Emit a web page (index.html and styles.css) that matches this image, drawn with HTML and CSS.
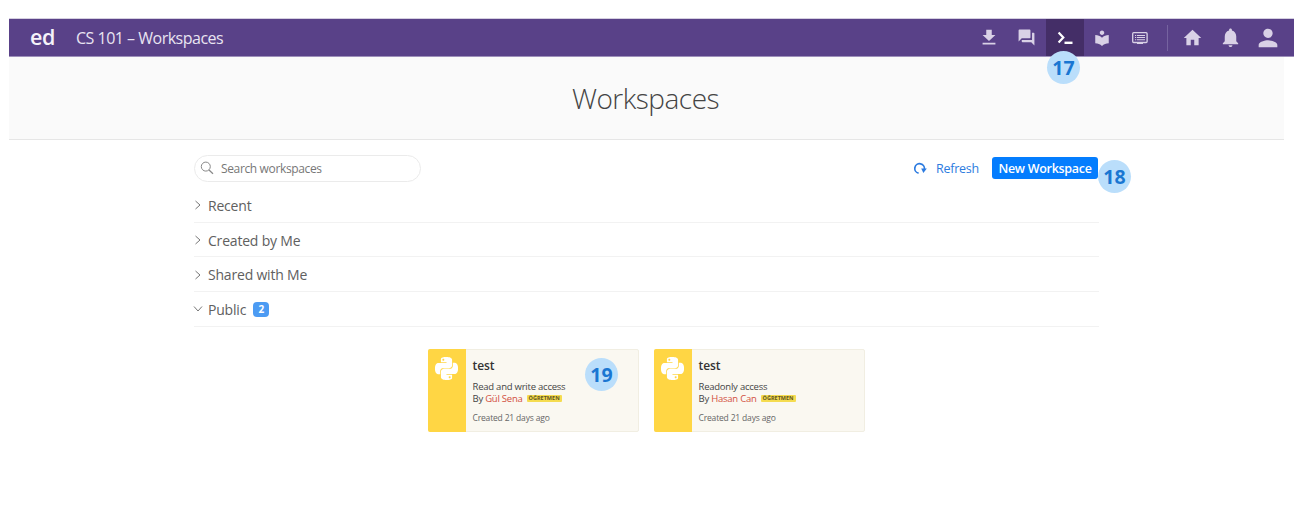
FILE: index.html
```html
<!DOCTYPE html>
<html lang="en">
<head>
<meta charset="utf-8">
<title>CS 101 – Workspaces</title>
<link rel="stylesheet" href="styles.css">
</head>
<body>
<svg class="defs" width="0" height="0">
  <symbol id="python" viewBox="0 0 24 24"><path d="M14.25.18l.9.2.73.26.59.3.45.32.34.34.25.34.16.33.1.3.04.26.02.2-.01.13V8.5l-.05.63-.13.55-.21.46-.26.38-.3.31-.33.25-.35.19-.35.14-.33.1-.3.07-.26.04-.21.02H8.77l-.69.05-.59.14-.5.22-.41.27-.33.32-.27.35-.2.36-.15.37-.1.35-.07.32-.04.27-.02.21v3.06H3.17l-.21-.03-.28-.07-.32-.12-.35-.18-.36-.26-.36-.36-.35-.46-.32-.59-.28-.73-.21-.88-.14-1.05-.05-1.23.06-1.22.16-1.04.24-.87.32-.71.36-.57.4-.44.42-.33.42-.24.4-.16.36-.1.32-.05.24-.01h.16l.06.01h8.16v-.83H6.18l-.01-2.75-.02-.37.05-.34.11-.31.17-.28.25-.26.31-.23.38-.2.44-.18.51-.15.58-.12.64-.1.71-.06.77-.04.84-.02 1.27.05zm-6.3 1.98l-.23.33-.08.41.08.41.23.34.33.22.41.09.41-.09.33-.22.23-.34.08-.41-.08-.41-.23-.33-.33-.22-.41-.09-.41.09zm13.09 3.95l.28.06.32.12.35.18.36.27.36.35.35.47.32.59.28.73.21.88.14 1.04.05 1.23-.06 1.23-.16 1.04-.24.86-.32.71-.36.57-.4.45-.42.33-.42.24-.4.16-.36.09-.32.05-.24.02-.16-.01h-8.22v.82h5.84l.01 2.76.02.36-.05.34-.11.31-.17.29-.25.25-.31.24-.38.2-.44.17-.51.15-.58.13-.64.09-.71.07-.77.04-.84.01-1.27-.04-1.07-.14-.9-.2-.73-.25-.59-.3-.45-.33-.34-.34-.25-.34-.16-.33-.1-.3-.04-.25-.02-.2.01-.13v-5.34l.05-.64.13-.54.21-.46.26-.38.3-.32.33-.24.35-.2.35-.14.33-.1.3-.06.26-.04.21-.02.13-.01h5.84l.69-.05.59-.14.5-.21.41-.28.33-.32.27-.35.2-.36.15-.36.1-.35.07-.32.04-.28.02-.21V6.07h2.09l.14.01zm-6.47 14.25l-.23.33-.08.41.08.41.23.33.33.23.41.08.41-.08.33-.23.23-.33.08-.41-.08-.41-.23-.33-.33-.23-.41-.08-.41.08z"/></symbol>
  <symbol id="chevron" viewBox="0 0 10 10"><path d="M2.5 1 7 5 2.5 9" fill="none" stroke="currentColor" stroke-width="1"/></symbol>
</svg>
<header class="topbar">
  <span class="logo">ed</span>
  <span class="course">CS 101 – Workspaces</span>
  <nav class="tabs">
    <a class="tab"><svg width="22" height="21" viewBox="0 0 24 24" preserveAspectRatio="none"><path d="M19 9h-4V3H9v6H5l7 7 7-7zM5 18v2h14v-2H5z"/></svg></a>
    <a class="tab"><svg width="19" height="19" viewBox="0 0 24 24"><path d="M21 6h-2v9H6v2c0 .55.45 1 1 1h11l4 4V7c0-.55-.45-1-1-1zm-4 6V3c0-.55-.45-1-1-1H3c-.55 0-1 .45-1 1v14l4-4h10c.55 0 1-.45 1-1z"/></svg></a>
    <a class="tab active"><svg width="18" height="16" viewBox="0 0 18 16"><path d="M2.6 2.5 7.3 7.5 2.6 12.5" fill="none" stroke="currentColor" stroke-width="2.2"/><path d="M8.5 11.6h8v2.4h-8z"/></svg></a>
    <a class="tab"><svg width="18" height="18" viewBox="0 0 24 24"><path d="M12 11.55C9.64 9.35 6.48 8 3 8v11c3.48 0 6.64 1.35 9 3.55 2.36-2.19 5.52-3.55 9-3.55V8c-3.48 0-6.64 1.35-9 3.55zM12 8c1.66 0 3-1.34 3-3s-1.34-3-3-3-3 1.34-3 3 1.34 3 3 3z"/></svg></a>
    <a class="tab"><svg width="16" height="14" viewBox="0 0 16 14"><rect x=".7" y="1.7" width="14.4" height="9.8" rx="1" fill="none" stroke="currentColor" stroke-width="1.3"/><path d="M5 11.5h6V13H5zM3 4h1.2v1H3zM5 4h8v1H5zM3 6.1h1.2v1H3zM5 6.1h8v1H5zM3 8.2h1.2v1H3zM5 8.2h8v1H5z"/></svg></a>
  </nav>
  <nav class="tabs account">
    <a class="tab"><svg width="21" height="22" viewBox="0 0 24 24" preserveAspectRatio="none"><path d="M10 20v-6h4v6h5v-8h3L12 3 2 12h3v8z"/></svg></a>
    <a class="tab"><svg width="23" height="23" viewBox="0 0 24 24"><path d="M12 22c1.1 0 2-.9 2-2h-4c0 1.1.89 2 2 2zm6-6v-5c0-3.07-1.64-5.64-4.5-6.32V4c0-.83-.67-1.5-1.5-1.5s-1.5.67-1.5 1.5v.68C7.63 5.36 6 7.92 6 11v5l-2 2v1h16v-1l-2-2z"/></svg></a>
    <a class="tab"><svg width="28" height="28" viewBox="0 0 24 24"><path d="M12 12c2.21 0 4-1.79 4-4s-1.79-4-4-4-4 1.79-4 4 1.79 4 4 4zm0 2c-2.67 0-8 1.34-8 4v2h16v-2c0-2.66-5.33-4-8-4z"/></svg></a>
  </nav>
</header>
<section class="banner"><h1 class="title">Workspaces</h1></section>
<main class="content">
  <div class="toolbar">
    <label class="search"><svg width="14" height="14" viewBox="0 0 14 14"><circle cx="5.8" cy="5.6" r="4.5" fill="none" stroke="currentColor"/><path d="m9 9 4 3.8" stroke="currentColor" stroke-width="1.2"/></svg><span class="placeholder">Search workspaces</span></label>
    <a class="refresh"><svg width="13" height="13" viewBox="0 0 13 13"><path d="M4.6 11.2A4.8 4.8 0 1 1 10.3 7.5" fill="none" stroke="currentColor" stroke-width="1.7"/><path d="M7.2 6.6h5.6L9.4 11z"/></svg><span class="refresh-label">Refresh</span></a>
    <a class="create"><span class="create-label">New Workspace</span></a>
  </div>
  <div class="group"><svg class="chevron"><use href="#chevron"/></svg><span>Recent</span></div>
  <div class="group"><svg class="chevron"><use href="#chevron"/></svg><span>Created by Me</span></div>
  <div class="group"><svg class="chevron"><use href="#chevron"/></svg><span>Shared with Me</span></div>
  <div class="group"><svg class="chevron open"><use href="#chevron"/></svg><span>Public</span><span class="count">2</span></div>
  <div class="cards">
    <article class="card">
      <div class="language"><svg width="23" height="23"><use href="#python"/></svg></div>
      <div class="details">
        <h2 class="name">test</h2>
        <p class="line">Read and write access</p>
        <p class="line">By <span class="author">Gül Sena</span><span class="role">ÖĞRETMEN</span></p>
        <p class="date">Created 21 days ago</p>
      </div>
    </article>
    <article class="card">
      <div class="language"><svg width="23" height="23"><use href="#python"/></svg></div>
      <div class="details">
        <h2 class="name">test</h2>
        <p class="line">Readonly access</p>
        <p class="line">By <span class="author">Hasan Can</span><span class="role">ÖĞRETMEN</span></p>
        <p class="date">Created 21 days ago</p>
      </div>
    </article>
  </div>
</main>
<span class="marker marker-tab">17</span>
<span class="marker marker-create">18</span>
<span class="marker marker-card">19</span>
</body>
</html>
```
FILE: styles.css
```css
* { box-sizing: border-box; }
body { margin: 0; padding: 18px 6px 0 9px; height: 518px; overflow: hidden; background: #fff; font-family: "Open Sans", sans-serif; color: #555; position: relative; }
svg { display: block; fill: currentColor; flex: none; }
.defs { position: absolute; }
h1, h2, p { margin: 0; }

.topbar { display: flex; align-items: center; height: 39px; padding: 0 7px 0 21px; background: #594188; border-top: 1px solid #d5cfe0; border-bottom: 1px solid #9d8fba; color: #e9e4f1; white-space: nowrap; }
.logo { width: 46px; padding-bottom: 1px; font-size: 21.5px; font-weight: 600; line-height: 30px; letter-spacing: -.3px; color: #f5f2f9; }
.course { font-size: 16px; letter-spacing: -.5px; }
.tabs { display: flex; height: 37px; margin-left: auto; color: #d9d1e6; }
.tab { display: flex; align-items: center; justify-content: center; width: 37.6px; padding-right: 1px; }
.active { background: #442e67; color: #fff; }
.account { margin-left: 8px; padding-left: 6px; background: linear-gradient(#7663a0, #7663a0) 0 50% / 1px 26px no-repeat; }
.account .tab { width: 38px; padding-right: 0; }

.banner { display: flex; justify-content: center; width: 1275px; height: 83px; padding: 20px 2px 0 0; background: #fafafa; border-bottom: 1px solid #e6e6e6; }
.title { font-size: 28px; font-weight: 300; line-height: 42px; letter-spacing: -.5px; color: #444; }

.content { width: 905px; margin-left: 185px; padding-top: 15px; }
.toolbar { display: flex; align-items: center; height: 26px; margin-bottom: 7px; }
.search { display: flex; align-items: center; gap: 7px; width: 227px; height: 27px; padding-left: 5px; border: 1px solid #ebebeb; border-radius: 14px; color: #888; }
.placeholder { font-size: 12px; letter-spacing: -.36px; color: #777; }
.refresh { display: flex; align-items: center; gap: 9px; margin-left: auto; margin-right: 13px; color: #2c7be0; font-size: 12.5px; letter-spacing: -.25px; }
.create { display: flex; align-items: center; justify-content: center; width: 106px; height: 22px; border-radius: 3px; background: #047dfe; color: #fff; font-size: 12.5px; font-weight: 600; letter-spacing: -.3px; white-space: nowrap; margin-right: 1px; }

.group { display: flex; align-items: center; height: 34.7px; padding-top: 1px; border-bottom: 1px solid #f2f2f2; font-size: 14px; letter-spacing: -.2px; color: #606060; }
.chevron { width: 10px; height: 10px; margin-right: 5px; margin-left: -1px; color: #777; }
.open { transform: rotate(90deg); }
.count { width: 16px; height: 15px; margin-left: 7px; border-radius: 4px; background: #4c9bf3; color: #fff; font-size: 10px; font-weight: 700; line-height: 15px; text-align: center; }

.cards { display: flex; justify-content: center; gap: 15px; padding: 22px 1px 0 0; }
.card { display: flex; width: 211px; height: 83px; border: 1px solid #f1eee2; border-radius: 2px; background: #faf8f1; }
.language { width: 38px; margin: -1px 0 -1px -1px; padding: 8px 0 0 7px; border-radius: 2px 0 0 2px; background: #ffd644; color: #fff; }
.details { padding: 8px 0 0 7px; white-space: nowrap; }
.name { margin-bottom: 7px; font-size: 12px; font-weight: 600; line-height: 16px; letter-spacing: -.1px; color: #333; }
.line { display: flex; align-items: center; font-size: 9.5px; line-height: 12px; letter-spacing: -.23px; color: #444; white-space: pre; }
.author { color: #d2503f; }
.role { height: 7px; margin-left: 4px; padding: 0 2px; border-radius: 1px; background: #f5dc50; color: #5f5420; font-size: 5.5px; font-weight: 700; line-height: 7px; letter-spacing: 0; }
.date { margin-top: 7px; font-size: 8.5px; line-height: 12px; letter-spacing: -.17px; color: #666; }

.marker { position: absolute; width: 33px; height: 33px; border-radius: 50%; background: #badefb; color: #1976d2; font-size: 19.5px; font-weight: 700; line-height: 33px; text-align: center; }
.marker-tab { left: 1047px; top: 51px; }
.marker-create { left: 1098px; top: 160px; }
.marker-card { left: 585px; top: 358px; }
```
